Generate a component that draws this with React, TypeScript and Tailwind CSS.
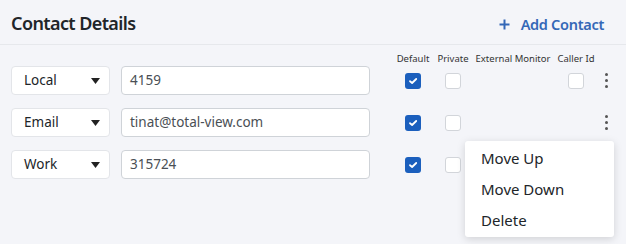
import React from "react";

type Row = { type: string; value: string; def: boolean; priv: boolean; callerId: boolean };

const rows: Row[] = [
  { type: "Local", value: "4159", def: true, priv: false, callerId: true },
  { type: "Email", value: "tinat@total-view.com", def: true, priv: false, callerId: false },
  { type: "Work", value: "315724", def: true, priv: false, callerId: false },
];

const Check = ({ on }: { on: boolean }) =>
  on ? (
    <span className="flex h-4 w-4 items-center justify-center rounded-[3px] bg-[#1b5fbd]">
      <svg width="10" height="8" viewBox="0 0 10 8">
        <path d="M2 4.2 L4.1 6 L8.2 2" stroke="#fff" strokeWidth="1.8" fill="none" strokeLinecap="round" strokeLinejoin="round" />
      </svg>
    </span>
  ) : (
    <span className="block h-4 w-4 rounded-[3px] border border-[#d2d5da] bg-white" />
  );

const Kebab = () => (
  <span className="flex flex-col items-center gap-[3px]">
    <span className="h-[3px] w-[3px] rounded-full bg-[#555]" />
    <span className="h-[3px] w-[3px] rounded-full bg-[#555]" />
    <span className="h-[3px] w-[3px] rounded-full bg-[#555]" />
  </span>
);

const App = () => {
  return (
    <div className="relative h-[244px] w-[626px] overflow-hidden bg-[#f4f5f9] font-['Noto_Sans',sans-serif] text-[#212529]">
      <div className="flex h-[45px] items-center justify-between border-b border-[#e6e8ec] pl-[11px] pr-[22px]">
        <h2 className="mt-[2px] text-[18px] font-semibold tracking-[-0.6px]">Contact Details</h2>
        <button className="mt-[5px] flex items-center gap-[11px] text-[14.5px] font-semibold tracking-[-0.3px] text-[#3468b7]">
          <svg width="11" height="11" viewBox="0 0 11 11">
            <path d="M5.5 0.5 V10.5 M0.5 5.5 H10.5" stroke="#3468b7" strokeWidth="2" />
          </svg>
          Add Contact
        </button>
      </div>

      <div className="pl-[11px] pt-[7px]">
        <div className="flex h-[13px] items-center text-[9.5px] leading-none text-[#333]">
          <div className="w-[381px]" />
          <div className="w-[42px] text-center">Default</div>
          <div className="w-[38px] text-center">Private</div>
          <div className="w-[82px] text-center">External Monitor</div>
          <div className="w-[44px] text-center">Caller Id</div>
        </div>

        <div className="mt-[1px] flex flex-col gap-[13px]">
          {rows.map((r, i) => (
            <div key={i} className="flex h-[29px] items-center">
              <div className="flex h-full w-[99px] items-center justify-between rounded-[4px] border border-[#e3e5e9] bg-white pl-[12px] pr-[9px] text-[13.5px]">
                <span>{r.type}</span>
                <svg width="9" height="6" viewBox="0 0 9 6">
                  <path d="M0 0 H9 L4.5 6 Z" fill="#222" />
                </svg>
              </div>
              <div className="ml-[11px] flex h-full w-[249px] items-center rounded-[4px] border border-[#cfd3d8] bg-white pl-[8px] text-[13.5px] text-[#4a4f55]">
                {r.value}
              </div>
              <div className="ml-[22px] flex w-[42px] justify-center">
                <Check on={r.def} />
              </div>
              <div className="flex w-[38px] justify-center">
                <Check on={r.priv} />
              </div>
              <div className="w-[82px]" />
              <div className="flex w-[44px] justify-center">{i === 0 && <Check on={false} />}</div>
              <div className="flex w-[16px] justify-center">{i < 2 && <Kebab />}</div>
            </div>
          ))}
        </div>
      </div>

      <div className="absolute left-[465px] top-[141px] flex h-[96px] w-[149px] flex-col justify-center gap-[9px] rounded-[3px] bg-white pl-[16px] text-[15px] text-[#212529] shadow-[0_2px_8px_rgba(0,0,0,0.15)]">
        <div className="leading-[22px]">Move Up</div>
        <div className="leading-[22px]">Move Down</div>
        <div className="leading-[22px]">Delete</div>
      </div>
    </div>
  );
};

export default App;
